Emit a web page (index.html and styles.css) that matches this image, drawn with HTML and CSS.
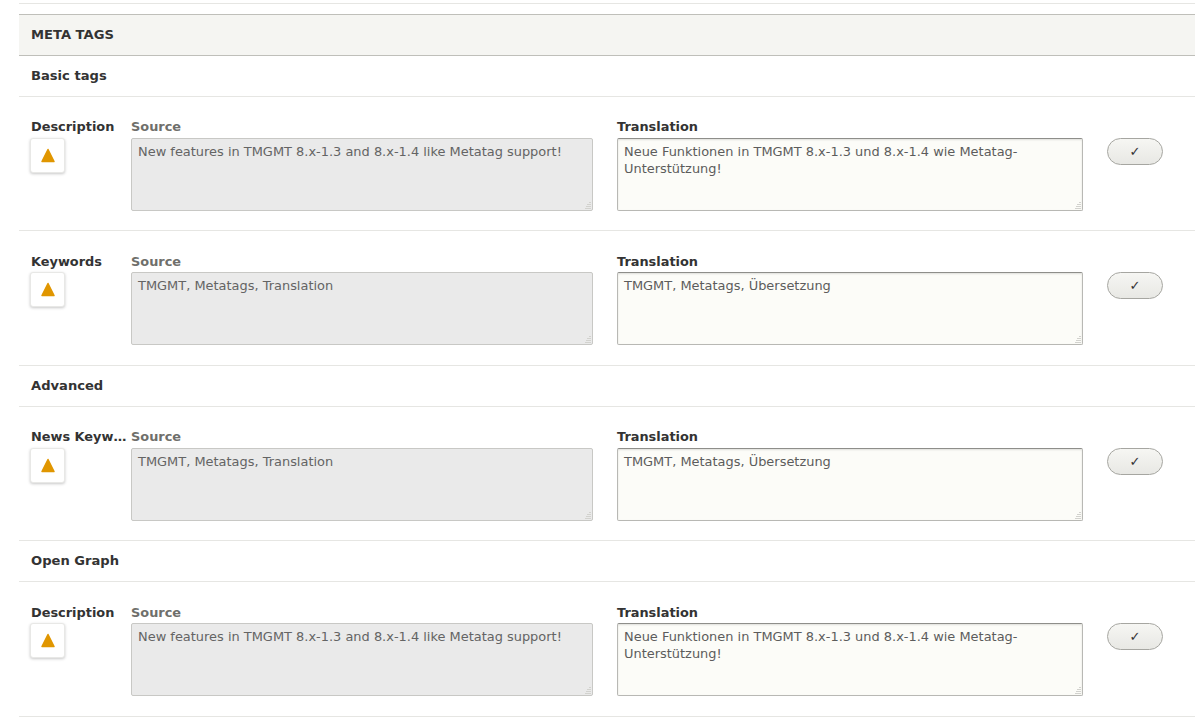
FILE: index.html
```html
<!DOCTYPE html>
<html lang="en">
<head>
<meta charset="utf-8">
<title>Meta tags</title>
<link rel="stylesheet" href="styles.css">
</head>
<body>
<div class="form">
  <div class="top-rule"></div>
  <section class="group">
    <h2 class="group-title">META TAGS</h2>
    <h3 class="sub">Basic tags</h3>
    <div class="row">
      <div class="name"><div class="name-text">Description</div><button class="state"><svg width="16" height="15" viewBox="0 0 16 15"><path d="M8 1.5 14 13.5H2Z" fill="#e09600" stroke="#e09600" stroke-width="1.5" stroke-linejoin="round"/></svg></button></div>
      <div class="field"><label class="lbl lbl-src">Source</label><textarea class="ta ta-src" disabled>New features in TMGMT 8.x-1.3 and 8.x-1.4 like Metatag support!</textarea></div>
      <div class="field"><label class="lbl">Translation</label><textarea class="ta ta-tr">Neue Funktionen in TMGMT 8.x-1.3 und 8.x-1.4 wie Metatag-Unterstützung!</textarea></div>
      <div class="act"><button class="ok">✓</button></div>
    </div>
    <div class="row">
      <div class="name"><div class="name-text">Keywords</div><button class="state"><svg width="16" height="15" viewBox="0 0 16 15"><path d="M8 1.5 14 13.5H2Z" fill="#e09600" stroke="#e09600" stroke-width="1.5" stroke-linejoin="round"/></svg></button></div>
      <div class="field"><label class="lbl lbl-src">Source</label><textarea class="ta ta-src" disabled>TMGMT, Metatags, Translation</textarea></div>
      <div class="field"><label class="lbl">Translation</label><textarea class="ta ta-tr">TMGMT, Metatags, Übersetzung</textarea></div>
      <div class="act"><button class="ok">✓</button></div>
    </div>
    <h3 class="sub">Advanced</h3>
    <div class="row">
      <div class="name"><div class="name-text">News Keywords</div><button class="state"><svg width="16" height="15" viewBox="0 0 16 15"><path d="M8 1.5 14 13.5H2Z" fill="#e09600" stroke="#e09600" stroke-width="1.5" stroke-linejoin="round"/></svg></button></div>
      <div class="field"><label class="lbl lbl-src">Source</label><textarea class="ta ta-src" disabled>TMGMT, Metatags, Translation</textarea></div>
      <div class="field"><label class="lbl">Translation</label><textarea class="ta ta-tr">TMGMT, Metatags, Übersetzung</textarea></div>
      <div class="act"><button class="ok">✓</button></div>
    </div>
    <h3 class="sub">Open Graph</h3>
    <div class="row">
      <div class="name"><div class="name-text">Description</div><button class="state"><svg width="16" height="15" viewBox="0 0 16 15"><path d="M8 1.5 14 13.5H2Z" fill="#e09600" stroke="#e09600" stroke-width="1.5" stroke-linejoin="round"/></svg></button></div>
      <div class="field"><label class="lbl lbl-src">Source</label><textarea class="ta ta-src" disabled>New features in TMGMT 8.x-1.3 and 8.x-1.4 like Metatag support!</textarea></div>
      <div class="field"><label class="lbl">Translation</label><textarea class="ta ta-tr">Neue Funktionen in TMGMT 8.x-1.3 und 8.x-1.4 wie Metatag-Unterstützung!</textarea></div>
      <div class="act"><button class="ok">✓</button></div>
    </div>
  </section>
</div>
</body>
</html>
```
FILE: styles.css
```css
html, body { margin: 0; padding: 0; background: #fff; overflow: hidden; }
body { font-family: "DejaVu Sans", sans-serif; font-size: 12.9px; color: #333; height: 720px; }
.form { margin: 0 2px 0 19px; }
.top-rule { height: 3px; border-bottom: 1px solid #e6e6e3; margin-bottom: 10px; }
.group { border-top: 1px solid #bfbfba; }
.group-title { margin: 0; height: 40px; line-height: 39px; padding-left: 12px; font-size: 13.1px; font-weight: 700; color: #333; background: #f5f5f2; border-bottom: 1px solid #bfbfba; }
.sub { box-sizing: border-box; margin: 0; height: 40.8px; line-height: 40.7px; padding-left: 12px; font-size: 13.1px; font-weight: 700; color: #333; border-bottom: 1px solid #e6e6e3; }
.row { display: grid; grid-template-columns: 112px 486px 490px 1fr; height: 134.6px; box-sizing: border-box; border-bottom: 1px solid #e6e6e3; padding-top: 21.4px; }
.name { padding-left: 12px; min-width: 0; }
.name-text { font-weight: 700; line-height: 18px; white-space: nowrap; overflow: hidden; text-overflow: ellipsis; width: 98px; }
.state { display: flex; align-items: center; justify-content: center; width: 35px; height: 35px; padding: 0; margin: 1.6px 0 0 -1px; background: #fff; border: 1px solid #e8e8e6; border-radius: 3px; box-shadow: 0 1px 3px rgba(0,0,0,.22); }
.field { display: flex; flex-direction: column; }
.lbl { font-weight: 700; line-height: 18px; margin-bottom: 1.6px; color: #333; }
.lbl-src { color: #6f6f6b; }
.ta { display: block; box-sizing: border-box; height: 73px; margin: 0; padding: 4px 6px; font: 12.94px/17px "DejaVu Sans", sans-serif; color: #5c5c5c; border: 1px solid #b8b8b4; border-radius: 2px; resize: vertical; outline: none; }
.ta::-webkit-resizer { background: linear-gradient(#d2d2ce, #d2d2ce) right 1px bottom 1px / 6px 1px no-repeat, linear-gradient(#d2d2ce, #d2d2ce) right 1px bottom 3px / 5px 1px no-repeat, linear-gradient(#d2d2ce, #d2d2ce) right 1px bottom 5px / 4px 1px no-repeat, linear-gradient(#d2d2ce, #d2d2ce) right 1px bottom 7px / 2px 1px no-repeat; }
.ta-src { width: 462px; background: #eaeaea; border-color: #c8c8c5; color: #646464; }
.ta-tr { width: 466px; background: #fcfcf8; border-top-color: #8e8e8a; box-shadow: inset 0 1px 2px rgba(0,0,0,.12); }
.act { padding-top: 19.6px; }
.ok { display: block; width: 56px; height: 27px; padding: 0; font: 13px/1 "DejaVu Sans", sans-serif; color: #333; background: linear-gradient(#f6f6f3, #e8e8e4); border: 1px solid #a6a6a1; border-radius: 14px; }
```
